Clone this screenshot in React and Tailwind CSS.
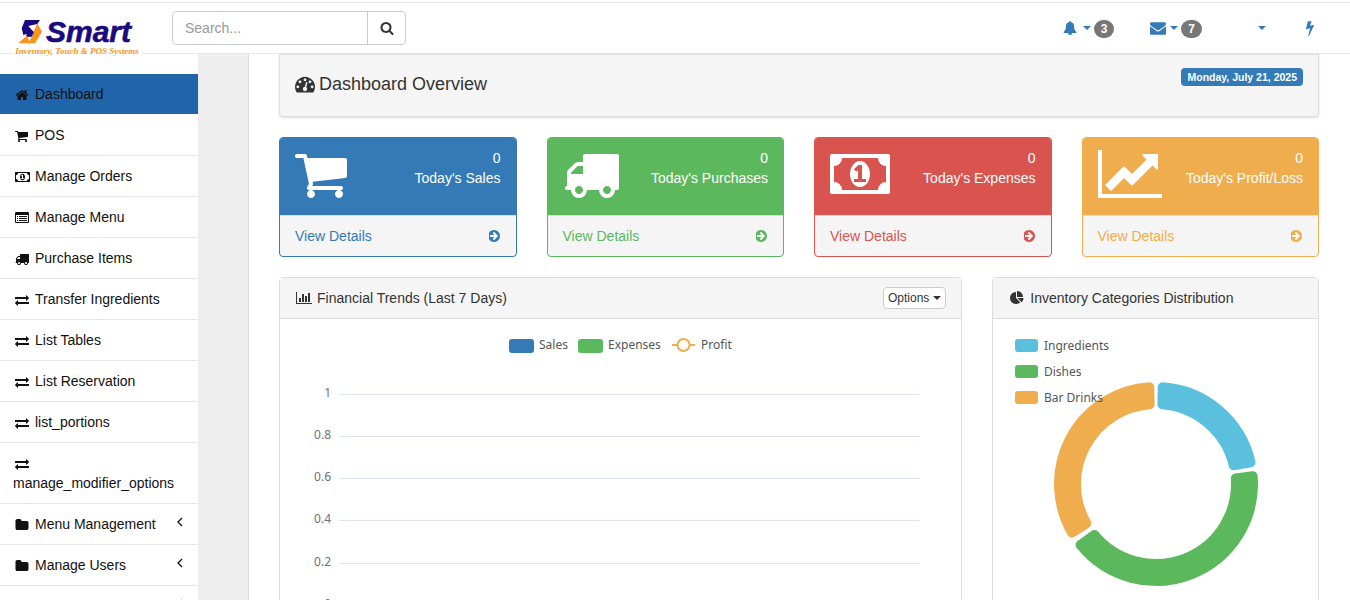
import { Fragment } from 'react';

// font-awesome 4 glyphs, the package only has the newer drawings
const glyphs = {
  home: 'M1472 992v480q0 26-19 45t-45 19h-384v-384h-256v384h-384q-26 0-45-19t-19-45v-480q0-1 .5-3t.5-3l575-474 575 474q1 2 1 6zm223-69l-62 74q-8 9-21 11h-3q-13 0-21-7l-692-577-692 577q-12 8-24 7-13-2-21-11l-62-74q-8-10-7-23.5t11-21.5l719-599q32-26 76-26t76 26l244 204v-195q0-14 9-23t23-9h192q14 0 23 9t9 23v408l219 182q10 8 11 21.5t-7 23.5z',
  cart: 'M704 1536q0 52-38 90t-90 38-90-38-38-90 38-90 90-38 90 38 38 90zm896 0q0 52-38 90t-90 38-90-38-38-90 38-90 90-38 90 38 38 90zm128-1088v512q0 24-16.5 42.5t-40.5 20.5l-1044 122q13 60 13 70 0 16-24 64h920q26 0 45 19t19 45-19 45-45 19h-1024q-26 0-45-19t-19-45q0-11 8-31.5t16-36 21.5-40 15.5-29.5l-177-823h-204q-26 0-45-19t-19-45 19-45 45-19h256q16 0 28.5 6.5t19.5 15.5 13 24.5 8 26 5.5 29.5 4.5 26h1201q26 0 45 19t19 45z',
  truck: 'M640 1408q0-52-38-90t-90-38-90 38-38 90 38 90 90 38 90-38 38-90zm-384-512h384v-256h-158q-13 0-22 9l-195 195q-9 9-9 22v30zm1280 512q0-52-38-90t-90-38-90 38-38 90 38 90 90 38 90-38 38-90zm256-1088v1024q0 15-4 26.5t-13.5 18.5-16.5 11.5-23.5 6-22.5 2-25.5 0-22.5-.5q0 106-75 181t-181 75-181-75-75-181h-384q0 106-75 181t-181 75-181-75-75-181h-64q-3 0-22.5.5t-25.5 0-22.5-2-23.5-6-16.5-11.5-13.5-18.5-4-26.5q0-26 19-45t45-19v-320q0-8-.5-35t0-38 2.5-34.5 6.5-37 14-30.5 22.5-30l198-198q19-19 50.5-32t58.5-13h160v-192q0-26 19-45t45-19h1024q26 0 45 19t19 45z',
  money: 'M768 1152h384v-96h-128v-448h-114l-148 137 77 80q42-37 55-57h2v288h-128v96zm512-256q0 70-21 142t-59.5 134-101.5 101-138 39-138-39-101.5-101-59.5-134-21-142 21-142 59.5-134 101.5-101 138-39 138 39 101.5 101 59.5 134 21 142zm512 256v-512q-106 0-181-75t-75-181h-1152q0 106-75 181t-181 75v512q106 0 181 75t75 181h1152q0-106 75-181t181-75zm128-832v1152q0 26-19 45t-45 19h-1792q-26 0-45-19t-19-45v-1152q0-26 19-45t45-19h1792q26 0 45 19t19 45z',
  line: 'M2048 1536v128h-2048v-1536h128v1408h1920zm-128-1248v435q0 21-19.5 29.5t-35.5-7.5l-121-121-633 633q-10 10-23 10t-23-10l-233-233-416 416-192-192 585-585q10-10 23-10t23 10l233 233 464-464-121-121q-16-16-7.5-35.5t29.5-19.5h435q14 0 23 9t9 23z',
  bar: 'M640 896v512h-256v-512h256zm384-512v1024h-256v-1024h256zm1024 1152v128h-2048v-1536h128v1408h1920zm-640-896v768h-256v-768h256zm384-384v1152h-256v-1152h256z',
  pie: 'M768 890l546 546q-106 108-247.5 168t-298.5 60q-209 0-385.5-103t-279.5-279.5-103-385.5 103-385.5 279.5-279.5 385.5-103v762zm187 6h773q0 157-60 298.5t-168 247.5zm709-128h-768v-768q209 0 385.5 103t279.5 279.5 103 385.5z',
  exchange: 'M1792 1184v192q0 13-9.5 22.5t-22.5 9.5h-1376v192q0 13-9.5 22.5t-22.5 9.5q-12 0-24-10l-319-320q-9-9-9-22 0-14 9-23l320-320q9-9 23-9 13 0 22.5 9.5t9.5 22.5v192h1376q13 0 22.5 9.5t9.5 22.5zm0-544q0 14-9 23l-320 320q-9 9-23 9-13 0-22.5-9.5t-9.5-22.5v-192h-1376q-13 0-22.5-9.5t-9.5-22.5v-192q0-13 9.5-22.5t22.5-9.5h1376v-192q0-14 9-23t23-9q12 0 24 10l319 319q9 9 9 23z',
  folder: 'M1728 608v704q0 92-66 158t-158 66h-1216q-92 0-158-66t-66-158v-960q0-92 66-158t158-66h320q92 0 158 66t66 158v32h672q92 0 158 66t66 158z',
  list: 'M384 1184v64q0 13-9.5 22.5t-22.5 9.5h-64q-13 0-22.5-9.5t-9.5-22.5v-64q0-13 9.5-22.5t22.5-9.5h64q13 0 22.5 9.5t9.5 22.5zm0-256v64q0 13-9.5 22.5t-22.5 9.5h-64q-13 0-22.5-9.5t-9.5-22.5v-64q0-13 9.5-22.5t22.5-9.5h64q13 0 22.5 9.5t9.5 22.5zm0-256v64q0 13-9.5 22.5t-22.5 9.5h-64q-13 0-22.5-9.5t-9.5-22.5v-64q0-13 9.5-22.5t22.5-9.5h64q13 0 22.5 9.5t9.5 22.5zm1152 512v64q0 13-9.5 22.5t-22.5 9.5h-960q-13 0-22.5-9.5t-9.5-22.5v-64q0-13 9.5-22.5t22.5-9.5h960q13 0 22.5 9.5t9.5 22.5zm0-256v64q0 13-9.5 22.5t-22.5 9.5h-960q-13 0-22.5-9.5t-9.5-22.5v-64q0-13 9.5-22.5t22.5-9.5h960q13 0 22.5 9.5t9.5 22.5zm0-256v64q0 13-9.5 22.5t-22.5 9.5h-960q-13 0-22.5-9.5t-9.5-22.5v-64q0-13 9.5-22.5t22.5-9.5h960q13 0 22.5 9.5t9.5 22.5zm128 704v-832q0-13-9.5-22.5t-22.5-9.5h-1472q-13 0-22.5 9.5t-9.5 22.5v832q0 13 9.5 22.5t22.5 9.5h1472q13 0 22.5-9.5t9.5-22.5zm128-1088v1088q0 66-47 113t-113 47h-1472q-66 0-113-47t-47-113v-1088q0-66 47-113t113-47h1472q66 0 113 47t47 113z',
  dashboard: 'M384 1152q0-53-37.5-90.5t-90.5-37.5-90.5 37.5-37.5 90.5 37.5 90.5 90.5 37.5 90.5-37.5 37.5-90.5zm192-448q0-53-37.5-90.5t-90.5-37.5-90.5 37.5-37.5 90.5 37.5 90.5 90.5 37.5 90.5-37.5 37.5-90.5zm428 481l101-382q6-26-7.5-48.5t-38.5-29.5-48 6.5-30 39.5l-101 382q-60 5-107 43.5t-63 98.5q-20 77 20 146t117 89 146-20 89-117q16-60-6-117t-72-91zm660-33q0-53-37.5-90.5t-90.5-37.5-90.5 37.5-37.5 90.5 37.5 90.5 90.5 37.5 90.5-37.5 37.5-90.5zm-640-640q0-53-37.5-90.5t-90.5-37.5-90.5 37.5-37.5 90.5 37.5 90.5 90.5 37.5 90.5-37.5 37.5-90.5zm448 192q0-53-37.5-90.5t-90.5-37.5-90.5 37.5-37.5 90.5 37.5 90.5 90.5 37.5 90.5-37.5 37.5-90.5zm320 448q0 261-141 483-19 29-54 29h-1402q-35 0-54-29-141-221-141-483 0-182 71-348t191-286 286-191 348-71 348 71 286 191 191 286 71 348z',
  bell: 'M912 1696q0-16-16-16-59 0-101.5-42.5t-42.5-101.5q0-16-16-16t-16 16q0 73 51.5 124.5t124.5 51.5q16 0 16-16zm816-288q0 52-38 90t-90 38h-448q0 106-75 181t-181 75-181-75-75-181h-448q-52 0-90-38t-38-90q50-42 91-88t85-119.5 74.5-158.5 50-206 19.5-260q0-152 117-282.5t307-158.5q-8-19-8-39 0-40 28-68t68-28 68 28 28 68q0 20-8 39 190 28 307 158.5t117 282.5q0 139 19.5 260t50 206 74.5 158.5 85 119.5 91 88z',
  envelope: 'M1792 710v794q0 66-47 113t-113 47h-1472q-66 0-113-47t-47-113v-794q44 49 101 87 362 246 497 345 57 42 92.5 65.5t94.5 48 110 24.5h2q51 0 110-24.5t94.5-48 92.5-65.5q170-123 498-345 57-39 100-87zm0-294q0 79-49 151t-122 123q-376 261-468 325-10 7-42.5 30.5t-54 38-52 32.5-57.5 27-50 9h-2q-23 0-50-9t-57.5-27-52-32.5-54-38-42.5-30.5q-91-64-262-182.5t-205-142.5q-62-42-117-115.5t-55-136.5q0-78 41.5-130t118.5-52h1472q65 0 112.5 47t47.5 113z',
  bolt: 'M1333 566q18 20 7 44l-540 1157q-13 25-42 25-4 0-14-2-17-5-25.5-19t-4.5-30l197-808-406 101q-4 1-12 1-18 0-31-11-18-15-13-39l201-825q4-14 16-23t28-9h328q19 0 32 12.5t13 29.5q0 8-5 18l-171 463 396-98q8-2 12-2 19 0 34 15z',
  search: 'M1216 832q0-185-131.5-316.5t-316.5-131.5-316.5 131.5-131.5 316.5 131.5 316.5 316.5 131.5 316.5-131.5 131.5-316.5zm512 832q0 52-38 90t-90 38q-54 0-90-38l-343-342q-179 124-399 124-143 0-273.5-55.5t-225-150-150-225-55.5-273.5 55.5-273.5 150-225 225-150 273.5-55.5 273.5 55.5 225 150 150 225 55.5 273.5q0 220-124 399l343 343q37 37 37 90z',
  arrow: 'M1285 896q0-27-18-45l-91-91-362-362q-18-18-45-18t-45 18l-91 91q-18 18-18 45t18 45l189 189h-502q-26 0-45 19t-19 45v128q0 26 19 45t45 19h502l-189 189q-19 19-19 45t19 45l91 91q18 18 45 18t45-18l362-362 91-91q18-18 18-45zm251 0q0 209-103 385.5t-279.5 279.5-385.5 103-385.5-103-279.5-279.5-103-385.5 103-385.5 279.5-279.5 385.5-103 385.5 103 279.5 279.5 103 385.5z',
};

const boxes = {
  money: '0 0 1920 1792',
  line: '0 0 2048 1792',
  bar: '0 0 2048 1792',
  cart: '64 0 1664 1792',
  arrow: '128 0 1536 1792',
};

function Fa({ name, className = 'h-3.5' }) {
  return (
    <svg viewBox={boxes[name] || '0 0 1792 1792'} fill="currentColor" className={`w-auto shrink-0 ${className}`}>
      <path d={glyphs[name]} />
    </svg>
  );
}

function Caret({ className = 'border-t-[#337ab7]' }) {
  return <span className={`inline-block w-0 h-0 border-x-4 border-t-4 border-x-transparent ${className}`} />;
}

const menu = [
  { icon: 'home', label: 'Dashboard', active: true },
  { icon: 'cart', label: 'POS' },
  { icon: 'money', label: 'Manage Orders' },
  { icon: 'list', label: 'Manage Menu' },
  { icon: 'truck', label: 'Purchase Items' },
  { icon: 'exchange', label: 'Transfer Ingredients' },
  { icon: 'exchange', label: 'List Tables' },
  { icon: 'exchange', label: 'List Reservation' },
  { icon: 'exchange', label: 'list_portions' },
  { icon: 'exchange', label: 'manage_modifier_options' },
  { icon: 'folder', label: 'Menu Management', sub: true },
  { icon: 'folder', label: 'Manage Users', sub: true },
];

const stats = [
  { icon: 'cart', label: "Today's Sales", border: 'border-[#337ab7]', bg: 'bg-[#337ab7]', text: 'text-[#337ab7]' },
  { icon: 'truck', label: "Today's Purchases", border: 'border-[#5cb85c]', bg: 'bg-[#5cb85c]', text: 'text-[#5cb85c]' },
  { icon: 'money', label: "Today's Expenses", border: 'border-[#d9534f]', bg: 'bg-[#d9534f]', text: 'text-[#d9534f]' },
  { icon: 'line', label: "Today's Profit/Loss", border: 'border-[#f0ad4e]', bg: 'bg-[#f0ad4e]', text: 'text-[#f0ad4e]' },
];

const ticks = [
  { label: '1', y: 75 },
  { label: '0.8', y: 117 },
  { label: '0.6', y: 159 },
  { label: '0.4', y: 201 },
  { label: '0.2', y: 244 },
  { label: '0', y: 286 },
];

const slices = [
  { color: '#5bc0de', from: 1, to: 80 },
  { color: '#5cb85c', from: 82.5, to: 234 },
  { color: '#f0ad4e', from: 237, to: 359 },
];

const chartFont = '"Noto Sans", sans-serif';

// ring segment, pulled in by the corner radius and stroked to get round corners
function slicePath(from, to) {
  const cx = 163;
  const cy = 165;
  const corner = 5;
  const outer = 102 - corner;
  const inner = 75 + corner;
  const point = (r, deg) => {
    const a = ((deg - 90) * Math.PI) / 180;
    return `${(cx + r * Math.cos(a)).toFixed(2)} ${(cy + r * Math.sin(a)).toFixed(2)}`;
  };
  const padOuter = (corner / outer) * (180 / Math.PI);
  const padInner = (corner / inner) * (180 / Math.PI);
  const large = to - from > 180 ? 1 : 0;
  return [
    `M${point(outer, from + padOuter)}`,
    `A${outer} ${outer} 0 ${large} 1 ${point(outer, to - padOuter)}`,
    `L${point(inner, to - padInner)}`,
    `A${inner} ${inner} 0 ${large} 0 ${point(inner, from + padInner)}`,
    'Z',
  ].join(' ');
}

function Logo() {
  return (
    <div className="w-[172px] shrink-0 self-stretch pl-3">
      <div className="relative z-10 flex h-[51px] w-[130px] flex-col items-center bg-white pt-4">
        <div className="flex h-[26px] items-center gap-1 self-start pl-1">
          <svg viewBox="0 0 26 26" className="h-[26px] w-[26px]">
            <polygon points="21.3,4.3 26,12.7 19,24.3 12.3,24.3 15.7,17.7" fill="#f7941d" />
            <polygon points="12,8 18,13 15.7,17.7 10,18" fill="#1a0a80" />
            <polygon points="9,1 24,1 21.3,5 12.3,7 17.3,12.7 7.3,16 5.7,9.3" fill="#1a0a80" />
            <polygon points="2.3,24.3 11,16.5 14,24.3" fill="#f7941d" />
          </svg>
          <span className="text-3xl font-bold italic leading-none text-[#1a0a80] [-webkit-text-stroke:0.6px_#1a0a80]">Smart</span>
        </div>
        <span className="whitespace-nowrap font-['Liberation_Serif',serif] text-[9px] font-bold italic leading-3 text-[#f7941d]">
          Inventory, Touch &amp; POS Systems
        </span>
      </div>
    </div>
  );
}

function Badge({ children }) {
  return (
    <span className="ml-[3px] mt-0.5 rounded-full bg-[#777] px-[7px] py-px text-xs font-bold leading-4 text-white">
      {children}
    </span>
  );
}

function Header() {
  return (
    <header className="mt-0.5 flex h-[52px] shrink-0 items-center border-y border-[#e7e7e7] bg-white">
      <Logo />
      <div className="flex h-[34px] w-[234px] rounded border border-[#ccc]">
        <input
          placeholder="Search..."
          className="min-w-0 flex-1 px-3 text-sm text-[#555] outline-none placeholder:text-[#999]"
        />
        <button className="flex w-[38px] items-center justify-center border-l border-[#ccc] text-[#333]">
          <Fa name="search" />
        </button>
      </div>
      <div className="ml-auto flex items-center gap-9 pr-8 text-[#337ab7]">
        <div className="flex items-center">
          <Fa name="bell" className="h-3.5" />
          <span className="ml-1.5 flex">
            <Caret />
          </span>
          <Badge>3</Badge>
        </div>
        <div className="flex items-center">
          <Fa name="envelope" className="h-4" />
          <span className="ml-1 flex">
            <Caret />
          </span>
          <Badge>7</Badge>
        </div>
        <span className="ml-5 flex">
          <Caret />
        </span>
        <Fa name="bolt" className="h-4" />
      </div>
    </header>
  );
}

function Sidebar() {
  return (
    <aside className="w-[198px] shrink-0 bg-white pt-5 text-[#111]">
      {menu.map((item) => (
        <a
          key={item.label}
          className={`block border-b py-2.5 pl-[13px] pr-3 ${item.active ? 'border-white bg-[#2065a9] bg-clip-padding' : 'border-[#e7e7e7]'}`}
        >
          {item.sub && (
            <svg viewBox="0 0 8 12" className="float-right mr-0.5 mt-0.5 h-3 w-2" fill="none" stroke="currentColor" strokeWidth="1.3">
              <polyline points="6,2 2,6 6,10" />
            </svg>
          )}
          <span className="ml-0.5 inline-block w-5 align-text-bottom">
            <Fa name={item.icon} className="h-3.5" />
          </span>
          {item.label}
        </a>
      ))}
      <div className="h-10 pr-3 pt-3">
        <svg viewBox="0 0 8 12" className="float-right mr-0.5 h-3 w-2" fill="none" stroke="currentColor" strokeWidth="1.3">
          <polyline points="6,2 2,6 6,10" />
        </svg>
      </div>
    </aside>
  );
}

function StatCard({ icon, label, border, bg, text }) {
  return (
    <div className={`overflow-hidden rounded border ${border} bg-[#f5f5f5]`}>
      <div className={`flex h-[77px] items-start justify-between px-[15px] pt-2 text-white ${bg}`}>
        <Fa name={icon} className="h-14" />
        <div className="pt-0.5 text-right">
          <div>0</div>
          <div>{label}</div>
        </div>
      </div>
      <div className={`flex items-center justify-between border-t border-[#ddd] px-[15px] py-2.5 ${text}`}>
        <span>View Details</span>
        <Fa name="arrow" className="h-3.5" />
      </div>
    </div>
  );
}

function PanelHead({ icon, title, children }) {
  return (
    <div className="flex h-[41px] items-center justify-between border-b border-[#ddd] bg-[#f5f5f5] px-[15px]">
      <div className="flex items-center gap-1">
        <span className="flex w-[18px] justify-center">
          <Fa name={icon} className="h-3.5" />
        </span>
        <span>{title}</span>
      </div>
      {children}
    </div>
  );
}

function TrendChart() {
  return (
    <svg width="682" height="300" fontFamily={chartFont} fontSize="12" className="block">
      <rect x="229" y="20" width="25" height="14" rx="3" fill="#337ab7" />
      <text x="259" y="30" fill="#555">Sales</text>
      <rect x="298" y="20" width="25" height="14" rx="3" fill="#5cb85c" />
      <text x="328" y="30" fill="#555">Expenses</text>
      <line x1="392" y1="26" x2="415" y2="26" stroke="#f0ad4e" strokeWidth="2" />
      <circle cx="403.5" cy="26" r="6" fill="#fff" stroke="#f0ad4e" strokeWidth="2" />
      <text x="421" y="30" fill="#555">Profit</text>
      {ticks.map((t) => (
        <Fragment key={t.label}>
          <line x1="59" y1={t.y + 0.5} x2="640" y2={t.y + 0.5} stroke="#e0e6f1" />
          <text x="51" y={t.y + 3} textAnchor="end" fill="#6e7079">{t.label}</text>
        </Fragment>
      ))}
    </svg>
  );
}

function CategoryChart() {
  return (
    <svg width="325" height="300" fontFamily={chartFont} fontSize="12" className="block">
      {slices.map((s) => (
        <path key={s.color} d={slicePath(s.from, s.to)} fill={s.color} stroke={s.color} strokeWidth="10" strokeLinejoin="round" />
      ))}
      <rect x="22" y="20" width="23" height="13" rx="3" fill="#5bc0de" />
      <text x="51" y="31" fill="#555">Ingredients</text>
      <rect x="22" y="46" width="23" height="13" rx="3" fill="#5cb85c" />
      <text x="51" y="57" fill="#555">Dishes</text>
      <rect x="22" y="72" width="23" height="13" rx="3" fill="#f0ad4e" />
      <text x="51" y="83" fill="#555">Bar Drinks</text>
    </svg>
  );
}

export default function App() {
  return (
    <div className="flex h-screen flex-col overflow-hidden bg-white font-['Liberation_Sans',Arial,sans-serif] text-sm leading-5 text-[#333]">
      <Header />
      <div className="flex min-h-0 flex-1">
        <Sidebar />
        <div className="w-[51px] shrink-0 border-r border-[#ddd] bg-[#eeeeee]" />
        <main className="min-w-0 flex-1 pl-[30px] pr-[31px]">
          <div className="mb-5 flex items-start justify-between rounded-b border border-[#ddd] bg-[#f5f5f5] px-[15px] py-5 shadow-sm">
            <h1 className="-mt-px flex items-center gap-1 pb-0.5 text-lg leading-5">
              <Fa name="dashboard" className="h-5" />
              Dashboard Overview
            </h1>
            <span className="-mt-[7px] rounded-sm bg-[#337ab7] px-1.5 py-0.5 text-[10.5px] font-bold leading-[14px] text-white">
              Monday, July 21, 2025
            </span>
          </div>

          <div className="grid grid-cols-4 gap-[30px]">
            {stats.map((s) => (
              <StatCard key={s.label} {...s} />
            ))}
          </div>

          <div className="mt-5 grid grid-cols-12 gap-[30px]">
            <section className="col-span-8 rounded border border-[#ddd] bg-white">
              <PanelHead icon="bar" title="Financial Trends (Last 7 Days)">
                <button className="flex items-center gap-1 rounded-sm border border-[#ccc] bg-white px-1 text-xs leading-5 text-[#333]">
                  Options
                  <Caret className="border-t-[#333]" />
                </button>
              </PanelHead>
              <TrendChart />
            </section>
            <section className="col-span-4 rounded border border-[#ddd] bg-white">
              <PanelHead icon="pie" title="Inventory Categories Distribution" />
              <CategoryChart />
            </section>
          </div>
        </main>
      </div>
    </div>
  );
}
